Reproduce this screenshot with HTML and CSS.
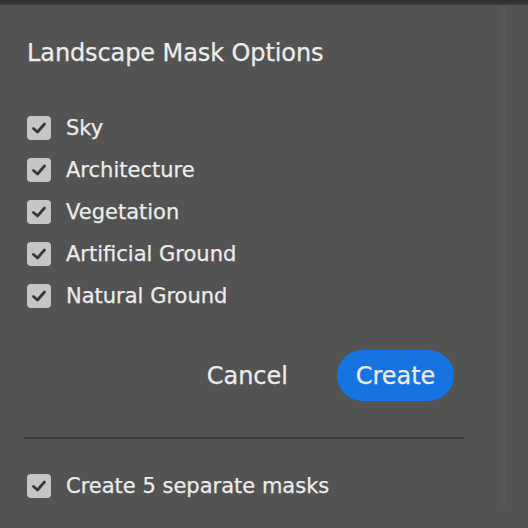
FILE: index.html
```html
<!DOCTYPE html>
<html lang="en">
<head>
    <meta charset="UTF-8">
    <meta name="viewport" content="width=device-width, initial-scale=1.0">
    <title>Landscape Mask Options</title>
    <link rel="stylesheet" href="styles.css">
</head>
<body>
    <div class="top-edge"></div>
    <div class="dialog">
        <h1 class="title">Landscape Mask Options</h1>

        <div class="options">
            <label class="option"><span class="check"><svg viewBox="0 0 24 24"><path d="M6.5 12.5 L10.5 16 L17.5 8"/></svg></span>Sky</label>
            <label class="option"><span class="check"><svg viewBox="0 0 24 24"><path d="M6.5 12.5 L10.5 16 L17.5 8"/></svg></span>Architecture</label>
            <label class="option"><span class="check"><svg viewBox="0 0 24 24"><path d="M6.5 12.5 L10.5 16 L17.5 8"/></svg></span>Vegetation</label>
            <label class="option"><span class="check"><svg viewBox="0 0 24 24"><path d="M6.5 12.5 L10.5 16 L17.5 8"/></svg></span>Artificial Ground</label>
            <label class="option"><span class="check"><svg viewBox="0 0 24 24"><path d="M6.5 12.5 L10.5 16 L17.5 8"/></svg></span>Natural Ground</label>
        </div>

        <div class="actions">
            <button class="btn-cancel">Cancel</button>
            <button class="btn-create">Create</button>
        </div>

        <hr class="divider">

        <label class="option"><span class="check"><svg viewBox="0 0 24 24"><path d="M6.5 12.5 L10.5 16 L17.5 8"/></svg></span>Create 5 separate masks</label>
    </div>
</body>
</html>
```

FILE: styles.css
```css
body {
    margin: 0;
    background-color: #535353;
    font-family: "DejaVu Sans", sans-serif;
    color: #ececec;
    height: 528px;
    overflow: hidden;
}
.top-edge {
    height: 5px;
    background: linear-gradient(#2e2e2e, #3c3c3c);
}
.dialog {
    padding: 0 0 0 27px;
    margin-right: 28px;
    background-color: #535353;
    box-shadow: 6px 0 0 #565656;
}
.title {
    margin: 0;
    padding-top: 34px;
    font-size: 24px;
    font-weight: normal;
    line-height: 28px;
    letter-spacing: -0.1px;
    -webkit-text-stroke: 0.25px #ececec;
}
.options {
    margin-top: 40px;
}
.option {
    display: flex;
    align-items: center;
    height: 42px;
    font-size: 21px;
    -webkit-text-stroke: 0.25px #ececec;
}
.check {
    flex-shrink: 0;
    width: 24px;
    height: 24px;
    border-radius: 4px;
    background-color: #c6c6c6;
    margin-right: 15px;
    display: flex;
}
.check svg {
    width: 24px;
    height: 24px;
    fill: none;
    stroke: #383838;
    stroke-width: 2.8;
    stroke-linecap: round;
    stroke-linejoin: round;
}
.actions {
    display: flex;
    justify-content: flex-end;
    align-items: center;
    margin-top: 33px;
    padding-right: 46px;
}
.actions button {
    font-family: "DejaVu Sans", sans-serif;
    font-size: 24px;
    color: #ececec;
    border: none;
    cursor: pointer;
    -webkit-text-stroke: 0.25px #ececec;
}
.btn-cancel {
    background: none;
    padding: 0;
    margin-right: 49px;
}
.btn-create {
    background-color: #1673e2;
    height: 51px;
    width: 117px;
    border-radius: 26px;
    padding: 0;
}
.divider {
    border: none;
    height: 2px;
    background-color: #3b3b3b;
    margin: 36px 36px 26px -3px;
}
```
